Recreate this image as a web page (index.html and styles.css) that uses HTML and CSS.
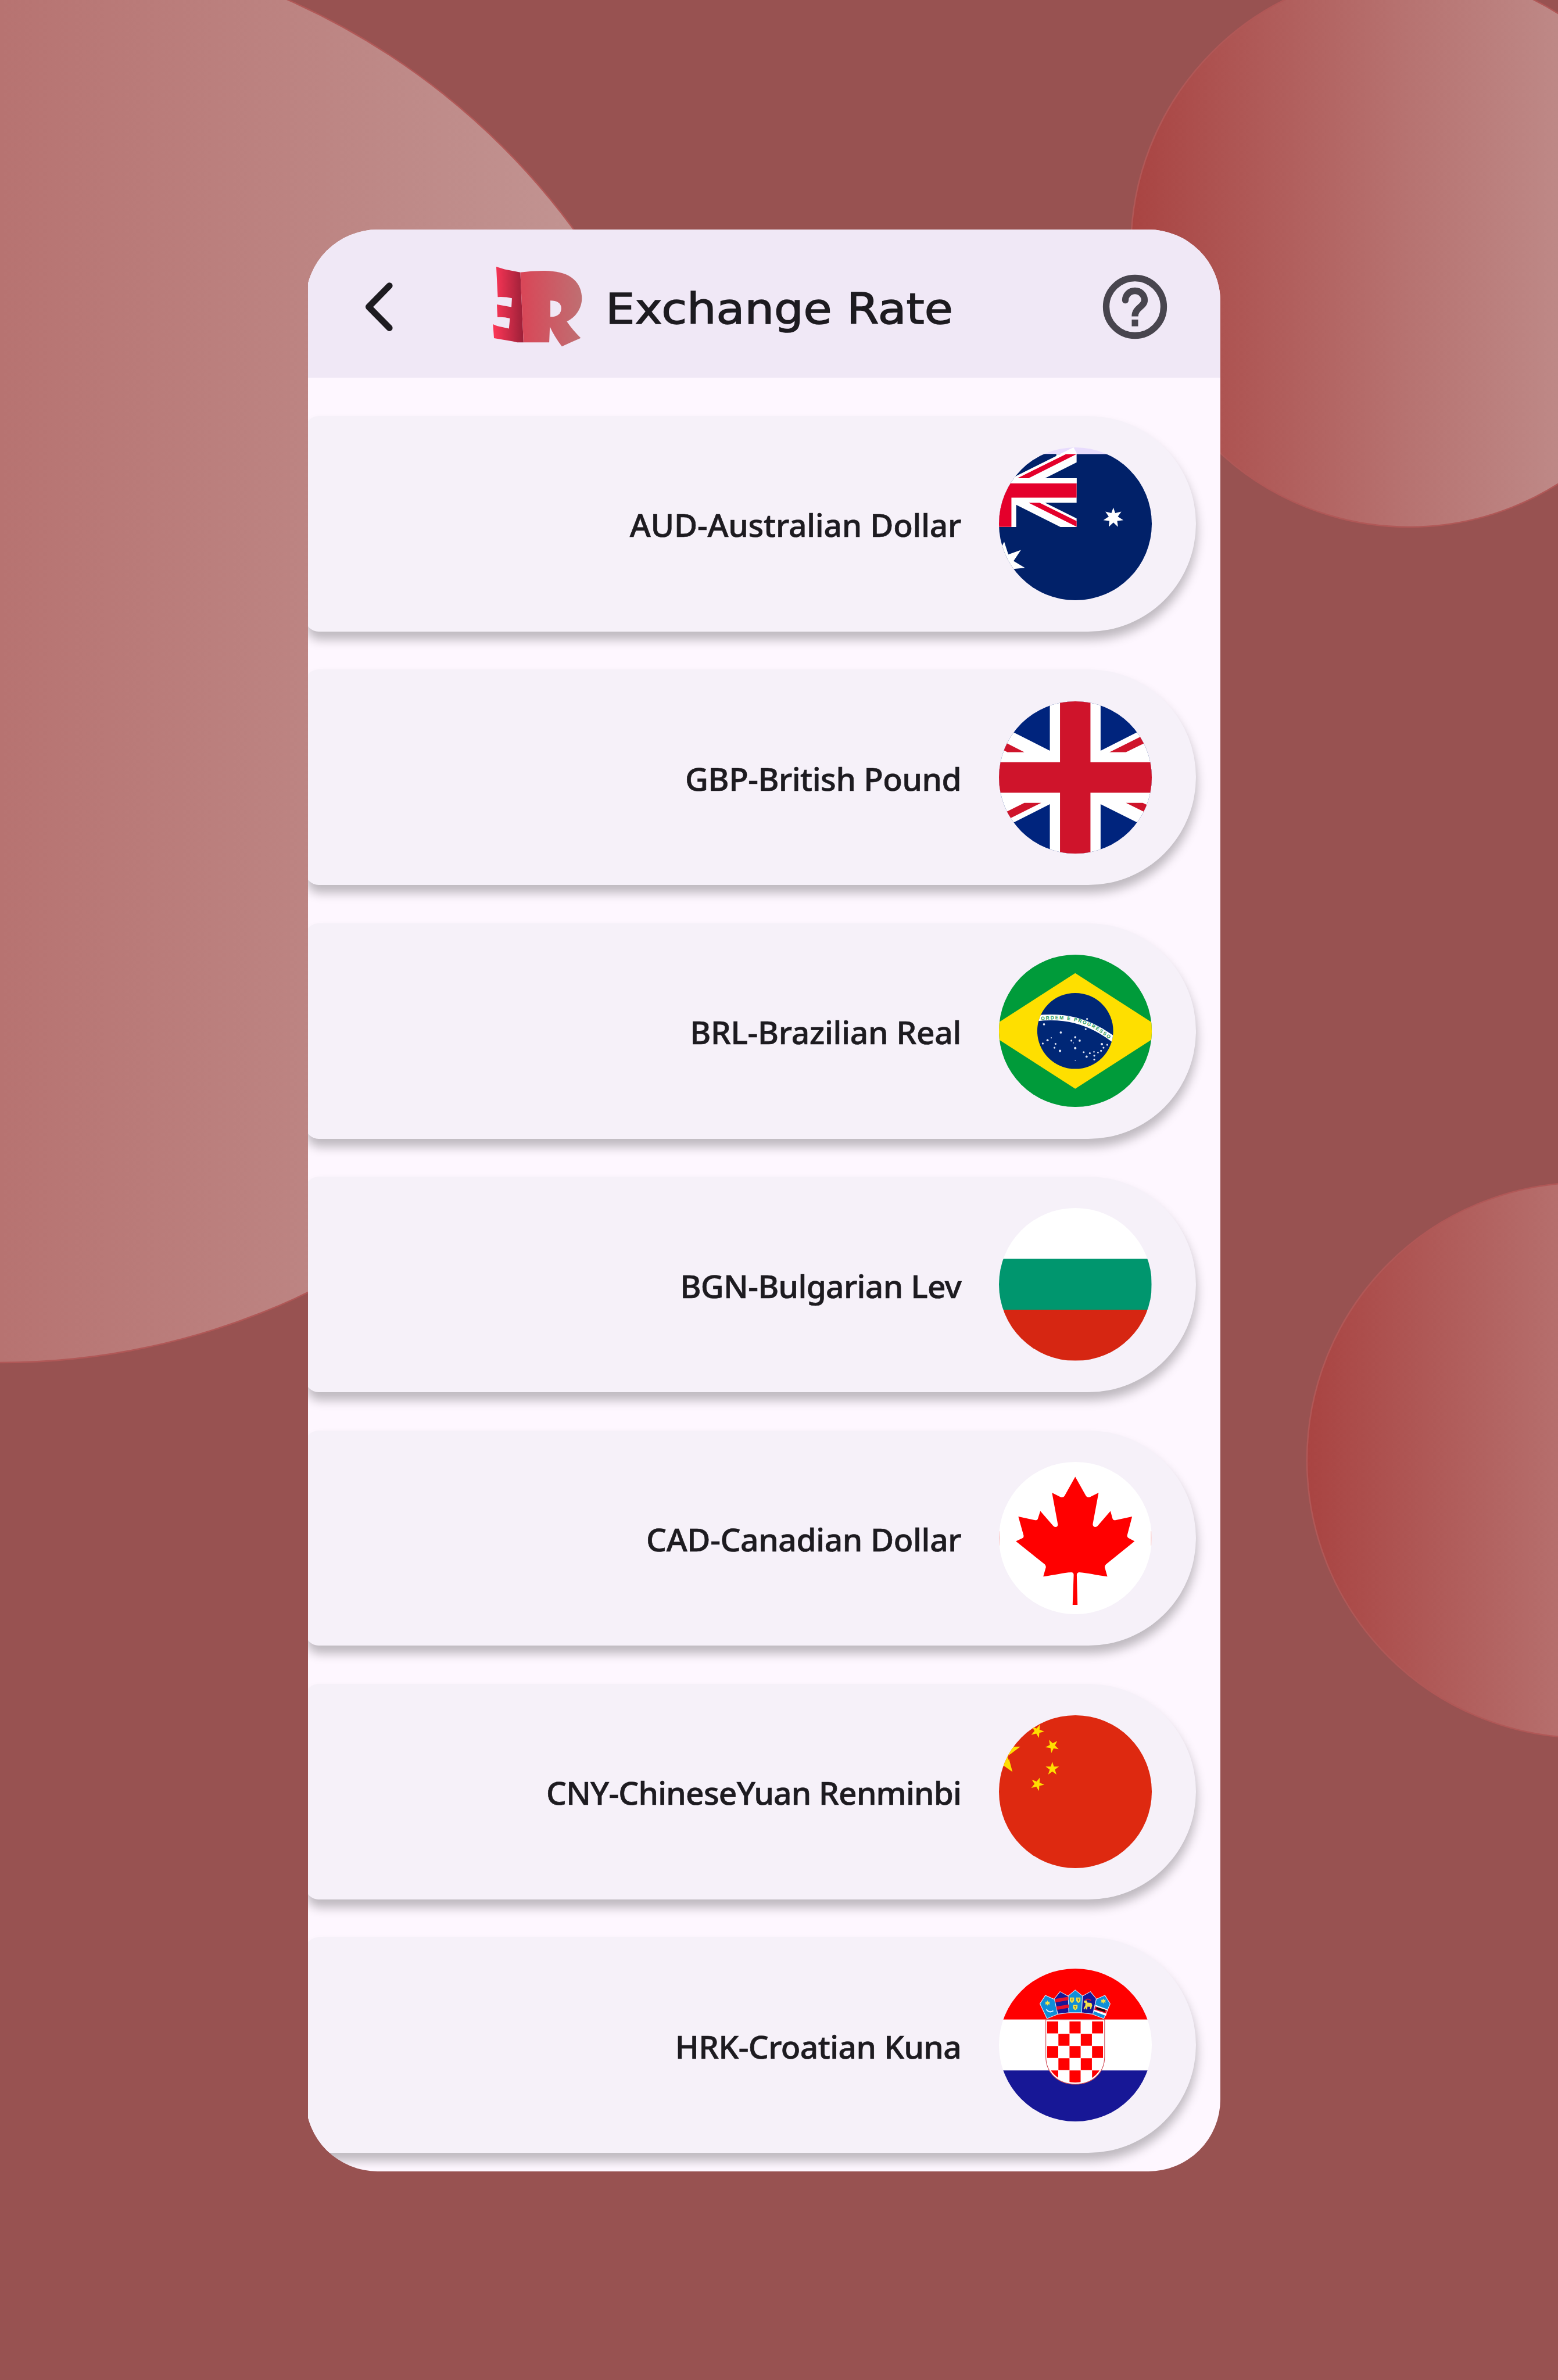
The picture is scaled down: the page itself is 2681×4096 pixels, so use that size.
FILE: index.html
```html
<!DOCTYPE html>
<html lang="en">
<head>
<meta charset="utf-8">
<title>Exchange Rate</title>
<link rel="stylesheet" href="styles.css">
</head>
<body>
<svg class="backdrop" viewBox="0 0 2681 4096" aria-hidden="true">
  <defs>
    <linearGradient id="bubble">
      <stop offset="0" stop-color="#a94442"/>
      <stop offset=".5" stop-color="#b77371"/>
      <stop offset="1" stop-color="#c49b99"/>
    </linearGradient>
  </defs>
  <g fill="url(#bubble)" stroke="#b05857" stroke-width="2.500">
    <circle cx="0" cy="1120" r="1225"/>
    <circle cx="2425" cy="428" r="479"/>
    <circle cx="2727" cy="2513" r="478"/>
  </g>
</svg>
<main class="phone">
  <div class="screen">
    <header class="topbar">
      <svg class="back" viewBox="965 745 80 138"><path d="M1033 758.500 978 814.500 1033 870.500" fill="none" stroke="#1d1b20" stroke-width="17" stroke-linecap="round" stroke-linejoin="round"/></svg>
      <svg class="logo" viewBox="0 0 840 750">
        <defs>
          <linearGradient id="le" gradientUnits="userSpaceOnUse" x1="75" y1="0" x2="300" y2="0"><stop offset="0" stop-color="#f83555"/><stop offset="1" stop-color="#9c2038"/></linearGradient>
          <linearGradient id="lr" gradientUnits="userSpaceOnUse" x1="280" y1="0" x2="765" y2="0"><stop offset="0" stop-color="#d94657"/><stop offset="1" stop-color="#bf6f72"/></linearGradient>
        </defs>
        <path fill="url(#le)" d="M83 56 150 76 275 101 300 658H250L215 650 65 625 57 514 90 528 184 548 192 467Q145 455 93 458L88 356 204 377 208 307Q160 294 95 297Z"/>
        <path fill="url(#lr)" fill-rule="evenodd" d="M275 101Q370 87 470 88C560 90 630 105 680 140C740 180 765 245 765 310C763 395 710 462 645 492Q695 565 756 623Q680 655 606 691Q545 610 510 533L505 658H300ZM514 325V455C570 455 601 430 601 386C601 345 565 325 514 325Z"/>
      </svg>
      <h1 class="title">Exchange Rate</h1>
      <svg class="help" viewBox="0 0 24 24"><g fill="none" stroke="#48454e" stroke-width="2.050"><circle cx="12" cy="12" r="9"/><path d="M12 15C12 12.200 15 12 15 9.900A3 2.900 0 0 0 9 9.900"/></g><circle cx="9" cy="9.950" r="1.020" fill="#48454e"/><path d="M11 16h2v2.100h-2z" fill="#48454e"/></svg>
    </header>
    <ul class="list">
      <li class="row"><span class="name aud">AUD-Australian Dollar</span>
        <svg class="flag" viewBox="127 264 992 992">
          <path fill="#e8dcfd" d="M100 250H1150V400H100Z"/>
          <path fill="#012169" d="M100 307H1150V1300H100Z"/>
          <path fill="#fff" d="M100 520 612 264 632 300V361L427 464H632V624H427L632 726V782H527L239 637V782H100Z"/>
          <path fill="#e4002b" d="M100 497H632V591H208V781H100ZM246 464 562 307H632L320 464ZM320 624H391L632 743V780Z"/>
          <path fill="#012169" d="M100 307H527L239 450 190 475H100Z"/>
          <path fill="#fff" d="M100 497V520L205 497 239 452 430 355 500 320V307L527 307 250 450 246 464H632V497ZM239 450 612 264 562 307 246 464H210Z"/>
          <path fill="#fff" d="M871 655 883 691 923 682 900 714 936 737 896 742 901 781 871 752 841 781 845 742 806 737 841 714 819 682 858 691ZM161 877 188 960 270 931 222 1003 296 1047 220 1055 120 1060 140 920Z"/>
        </svg></li>
      <li class="row"><span class="name gbp">GBP-British Pound</span>
        <svg class="flag" viewBox="127 272 992 992">
          <path fill="#00247d" d="M100 250H1150V1290H100Z"/>
          <path fill="#fff" d="M100 412 458 593V272H788V593L1146 412V995L1150 1122 788 941V1264H458V941L100 1122Z"/>
          <path fill="#cf142b" d="M524 250H722V668H1150V866H722V1290H524V866H100V668H524ZM292 603H182L70 545V490ZM846 603 1150 451V506L953 603ZM292 932H402L100 1083V1028ZM953 932H1062L1170 985V1040Z"/>
        </svg></li>
      <li class="row"><span class="name brl">BRL-Brazilian Real</span>
        <svg class="flag" viewBox="127 255 992 992">
          <defs>
            <clipPath id="globe"><circle cx="623" cy="751" r="247"/></clipPath>
            <path id="motto" d="M401 681C540 668 680 665 846 806"/>
          </defs>
          <path fill="#009b3a" d="M100 240H1150V1270H100Z"/>
          <path fill="#fedf00" d="M623 375 1207 751 623 1127 39 751Z"/>
          <circle cx="623" cy="751" r="247" fill="#002776"/>
          <path d="M360 670C540 648 710 675 890 820" fill="none" stroke="#fff" stroke-width="38" clip-path="url(#globe)"/>
          <text class="motto"><textPath href="#motto" textLength="473">ORDEM E PROGRESSO</textPath></text>
          <g fill="#dfe5f5">
            <circle cx="420" cy="708" r="7"/><circle cx="529" cy="761" r="7"/><circle cx="700" cy="673" r="6"/><circle cx="691" cy="739" r="6"/><circle cx="623" cy="792" r="7"/><circle cx="598" cy="814" r="6"/><circle cx="652" cy="814" r="7"/><circle cx="611" cy="829" r="3"/><circle cx="623" cy="863" r="8"/><circle cx="443" cy="811" r="7"/><circle cx="467" cy="796" r="4"/><circle cx="412" cy="833" r="6"/><circle cx="495" cy="835" r="6"/><circle cx="488" cy="860" r="6"/><circle cx="524" cy="881" r="8"/><circle cx="678" cy="889" r="6"/><circle cx="697" cy="918" r="7"/><circle cx="718" cy="896" r="6"/><circle cx="745" cy="887" r="5"/><circle cx="747" cy="912" r="6"/><circle cx="747" cy="937" r="6"/><circle cx="771" cy="892" r="5"/><circle cx="791" cy="880" r="6"/><circle cx="807" cy="860" r="6"/><circle cx="796" cy="837" r="8"/><circle cx="831" cy="841" r="6"/><circle cx="623" cy="944" r="3"/>
          </g>
        </svg></li>
      <li class="row"><span class="name bgn">BGN-Bulgarian Lev</span>
        <svg class="flag" viewBox="0 0 300 300"><path fill="#fff" d="M0 0H300V100H0Z"/><path fill="#00966e" d="M0 100H300V200H0Z"/><path fill="#d62612" d="M0 200H300V300H0Z"/></svg></li>
      <li class="row"><span class="name cad">CAD-Canadian Dollar</span>
        <svg class="flag" viewBox="127 246 992 992">
          <path fill="#fff" d="M100 230H1150V1260H100Z"/>
          <path fill="#f6b5b8" d="M127 697h4v92h-4zM1115 697h4v92h-4z"/>
          <path fill="#f00" d="M623 342 693 467Q700 480 720 474L775 446 737 650C736 670 757 675 769 662L852 565 866 615Q870 626 884 625L993 601 961 723Q960 736 968 740L1009 762 823 912Q813 922 815 932L832 991C760 983 700 967 650 964Q634 965 633 980L638 1176H606L613 980Q613 965 597 964C547 966 490 982 415 991L432 932Q434 922 425 912L237 762 281 741Q290 736 287 723L253 601 362 625Q376 626 380 615L396 565 478 660C490 675 511 672 510 652L472 446 526 474Q546 480 553 468Z"/>
        </svg></li>
      <li class="row"><span class="name cny">CNY-ChineseYuan Renminbi</span>
        <svg class="flag" viewBox="127 254 992 992">
          <defs><path id="star" d="M0-46 10.300-14.200H43.700L16.700 5.400 27 37.200 0 17.600-27 37.200-16.700 5.400-43.700-14.200H-10.300Z"/></defs>
          <path fill="#de2910" d="M100 230H1150V1260H100Z"/>
          <g fill="#ffde00">
            <use href="#star" transform="translate(376 357) rotate(22)"/>
            <use href="#star" transform="translate(474 454) rotate(-28)"/>
            <use href="#star" transform="translate(474 602)"/>
            <use href="#star" transform="translate(376 702) rotate(22)"/>
            <path d="M180 458H266L187 518 215 622 130 562Z"/>
          </g>
          <path fill="#de2910" d="M188 517 203 507 190 545 184 528Z"/>
        </svg></li>
      <li class="row"><span class="name hrk">HRK-Croatian Kuna</span>
        <svg class="flag" viewBox="120 223 934 934">
          <defs><clipPath id="shield"><path d="M415 545H758V760C758 860 685 920 587 920S415 860 415 760Z"/></clipPath></defs>
          <path fill="#f00" d="M100 200H1080V535H100Z"/><path fill="#fff" d="M100 535H1080V847H100Z"/><path fill="#171796" d="M100 847H1080V1180H100Z"/>
          <path d="M407 535H767V760C767 865 690 931 587 931S407 865 407 760Z" fill="#fff" stroke="#cf4a55" stroke-width="4"/>
          <path clip-path="url(#shield)" fill="#f00" d="M415 545h68v75h-68zM552 545h68v75h-68zM690 545h68v75h-68zM484 622h68v73h-68zM621 622h68v73h-68zM415 697h68v73h-68zM552 697h68v73h-68zM690 697h68v73h-68zM484 772h68v73h-68zM621 772h68v73h-68zM415 847h68v80h-68zM552 847h68v80h-68zM690 847h68v80h-68z"/>
          <g stroke="#dbe3f5" stroke-width="4" stroke-linejoin="round">
            <path fill="#0f8fd8" d="M404 387 461 412 480 502 414 529 371 438Z"/>
            <path fill="#0f8fd8" d="M769 387 716 410 693 502 762 529 801 438Z"/>
            <path fill="#171796" d="M494 364 545 392 549 493 480 502 459 408Z"/>
            <path fill="#171796" d="M680 364 716 408 695 502 624 493 630 392Z"/>
            <path fill="#0f8fd8" d="M587 354 631 390 626 493H548L544 390Z"/>
          </g>
          <path fill="#e8102a" d="M460 409 545 396V416L466 430ZM470 455 547 443V463L475 476Z"/>
          <path fill="#fff" d="M712 445 786 473 775 512 701 484Z"/>
          <path fill="#e8102a" d="M709 453 782 478 776 498 704 475Z"/>
          <path d="M716 465 770 482" stroke="#160a10" stroke-width="13"/>
          <path d="M410 472Q428 498 453 481" fill="none" stroke="#d9f0ff" stroke-width="7"/>
          <path d="M649 417Q665 402 684 419" fill="none" stroke="#c5153c" stroke-width="7"/>
          <g fill="#f2e14a">
            <path d="M417 418 422 427 433 425 428 434 433 443 422 441 417 450 412 441 402 443 406 434 402 425 412 427ZM759 406 764 415 775 413 770 422 775 431 764 429 759 438 754 429 744 431 748 422 744 413 754 415Z"/>
            <path d="M554 400H580V420Q575 432 567 433 558 430 554 420ZM593 400H619V420Q615 432 606 433 597 430 593 420ZM573 445H601V463Q597 475 587 477 577 474 573 463Z"/>
            <path d="M640 420 656 418 662 431 686 433 691 448 684 470H677L679 457 662 456 660 473H653L652 460 644 474 638 468 648 450 650 434 641 431Z"/>
          </g>
          <path d="M561 409H574M567 409V423M600 409H613M606 409V423M580 455H594M587 455V468" stroke="#746f20" stroke-width="4"/>
        </svg></li>
    </ul>
  </div>
</main>
</body>
</html>
```

FILE: styles.css
```css
* { box-sizing: border-box; }

body {
  height: 4096px;
  margin: 0;
  padding-top: 395px;
  overflow: hidden;
  background: #985251;
  color: #1d1b20;
  font-family: "Noto Sans", "Open Sans", sans-serif;
}

.backdrop {
  position: absolute;
  top: 0;
  left: 0;
  z-index: -1;
  width: 2681px;
  height: 4096px;
}

/* The screen's own left edge is cropped slightly by the frame */
.phone {
  width: 1569.500px;
  height: 3342.200px;
  margin: 0 0 0 530.200px;
  overflow: hidden;
}

.screen {
  height: 100%;
  margin-left: -4.500px;
  border-radius: 124px;
  overflow: hidden;
  background: #fef7ff;
}

.topbar {
  display: flex;
  align-items: center;
  height: 255px;
  padding: 11px 81px 0 100px;
  background: #f0e8f6;
}

.back { width: 51.900px; height: 89.500px; flex: none; }
.logo { width: 181.500px; height: 162.100px; margin-left: 158.800px; flex: none; }

.title {
  margin: 8px auto 0 24px;
  font: 400 73.500px/90px "DejaVu Sans", sans-serif;
  white-space: nowrap;
  transform: scaleX(1.085);
  transform-origin: left;
  -webkit-text-stroke: 1.500px #1d1b20;
}

.help { width: 132px; height: 132px; flex: none; }

.list {
  display: flex;
  flex-direction: column;
  gap: 65.600px;
  margin: 0;
  padding: 66px 42px 0 0;
  list-style: none;
}

.row {
  display: flex;
  align-items: center;
  justify-content: flex-end;
  gap: 65px;
  height: 370.800px;
  padding-right: 76px;
  border-radius: 22px 185.400px 185.400px 22px;
  background: #f6f1f9;
  box-shadow: 2px 14px 17px rgba(0, 0, 0, .25);
}

.name {
  padding-top: 4px;
  font-size: 55px;
  line-height: 80px;
  font-weight: 500;
  white-space: nowrap;
  -webkit-text-stroke: .700px #1d1b20;
}

.aud { letter-spacing: -.200px; }
.gbp { letter-spacing: -.460px; }
.brl { letter-spacing: -.220px; }
.bgn { letter-spacing: -.620px; }
.cad { letter-spacing: -.340px; }
.cny { letter-spacing: -.760px; }
.hrk { letter-spacing: -.550px; }

.flag {
  flex: none;
  width: 262.500px;
  height: 262.500px;
  border-radius: 50%;
}

.motto {
  font: 700 32px "Liberation Sans", sans-serif;
  fill: #289a5c;
}
```
